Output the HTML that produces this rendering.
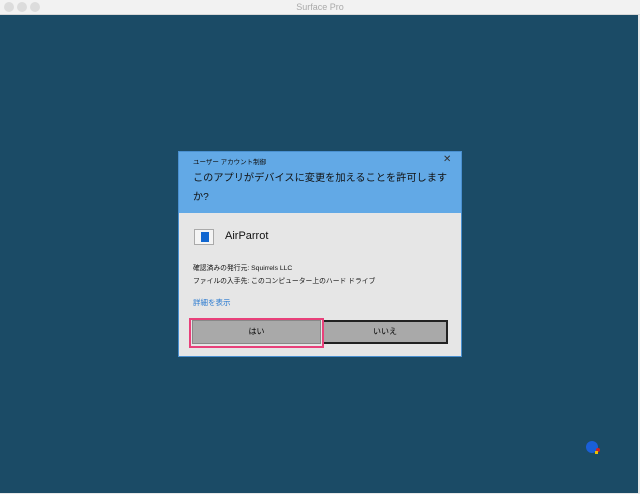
<!DOCTYPE html><html><head><meta charset="utf-8"><style>
body{margin:0;width:640px;height:494px;overflow:hidden;background:#1b4b66;font-family:"Liberation Sans","Noto Sans CJK JP",sans-serif;position:relative}
.tb{position:absolute;left:0;top:0;width:640px;height:14px;background:#f2f2f2;border-bottom:1px solid #d8d8d8;text-align:center;font-size:9px;color:#aaa;line-height:14px}
.d{position:absolute;width:10px;height:10px;border-radius:50%;background:#dcdcdc;top:2px}
.dlg{position:absolute;left:178px;top:151px;width:284px;height:206px;background:#e6e6e6;border:1px solid #4a90d0;box-sizing:border-box}
.hd{position:absolute;left:0;top:0;width:282px;height:61px;background:#62a9e6}
.a{position:absolute;white-space:nowrap;color:#111}
.btn{position:absolute;top:320px;height:24px;background:#a9a9a9;font-size:8px;text-align:center;box-sizing:border-box}
</style></head><body>
<div class="tb">Surface Pro</div>
<div class="d" style="left:4px"></div><div class="d" style="left:17px"></div><div class="d" style="left:30px"></div>
<div style="position:absolute;right:0;top:15px;width:2px;height:479px;background:#e8e8e8"></div>
<div style="position:absolute;left:0;bottom:0;width:640px;height:1px;background:#e8e8e8"></div>
<div class="dlg"><div class="hd"></div></div>
<div class="a" style="left:193px;top:156px;font-size:6.5px">ユーザー アカウント制御</div>
<div class="a" style="left:443px;top:154px;font-size:10px;color:#333">✕</div>
<div class="a" style="left:193px;top:169px;font-size:10.2px;line-height:19px">このアプリがデバイスに変更を加えることを許可します<br>か?</div>
<div style="position:absolute;left:194px;top:229px;width:20px;height:16px;background:#f4f4f4;border:1px solid #aaa;box-sizing:border-box"><div style="position:absolute;left:6px;top:2px;width:8px;height:10px;background:#1066d0"></div></div>
<div class="a" style="left:225px;top:230px;font-size:11px">AirParrot</div>
<div class="a" style="left:193px;top:262px;font-size:6.8px;line-height:13px">確認済みの発行元: Squirrels LLC<br>ファイルの入手先: このコンピューター上のハード ドライブ</div>
<div class="a" style="left:193px;top:297px;font-size:7.5px;color:#2a7ad0">詳細を表示</div>
<div class="btn" style="left:322px;width:126px;border:2px solid #222;line-height:20px">いいえ</div>
<div class="btn" style="left:192px;width:129px;border:1px solid #888;line-height:22px">はい</div>
<div style="position:absolute;left:189px;top:318px;width:135px;height:30px;border:2px solid #e8407a;box-sizing:border-box"></div>
<div style="position:absolute;left:586px;top:441px;width:12px;height:12px;border-radius:50%;background:#1a5fd8"></div>
<div style="position:absolute;left:596px;top:448px;width:4px;height:4px;background:#d02020;border-radius:50%"></div>
<div style="position:absolute;left:595px;top:451px;width:3px;height:3px;background:#f0c000"></div>
</body></html>
